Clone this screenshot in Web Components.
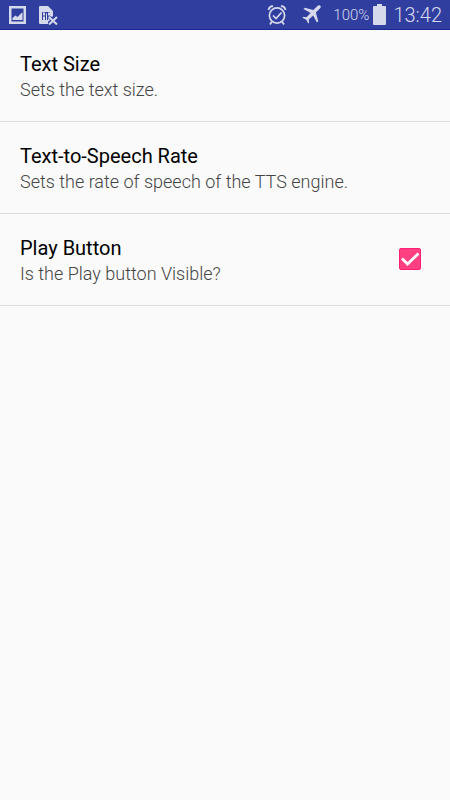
<!DOCTYPE html>
<html lang="en">
<head>
<meta charset="utf-8">
<meta name="viewport" content="width=device-width, initial-scale=1">
<title>Settings</title>
<style>
  body {
    margin: 0;
    min-height: 100vh;
    background-color: #fafafa;
    font-family: Roboto, "Noto Sans", sans-serif;
  }
</style>
</head>
<body>
<settings-screen></settings-screen>

<script>
const statusTemplate = document.createElement('template');
statusTemplate.innerHTML = `
  <style>
  :host {
    display: flex;
    justify-content: space-between;
    box-sizing: border-box;
    height: 30px;
    padding: 0 8px;
    background-color: #303f9f;
    border-bottom: 1px solid #1c2b8f;
    color: #d6d9ec;
  }

  .group {
    display: flex;
    align-items: center;
  }

  .notifications {
    gap: 11px;
  }

  svg {
    display: block;
    fill: currentColor;
  }

  .alarm {
    margin-right: 15px;
  }

  .plane {
    margin-right: 12px;
  }

  .percent {
    margin-right: 4px;
    font-size: 15px;
    line-height: 30px;
    font-weight: 300;
  }

  .clock {
    margin-left: 7px;
    font-size: 20px;
    line-height: 30px;
    font-weight: 300;
  }
  </style>
  <div class="group notifications">
    <svg width="20" height="20" viewBox="0 0 20 20" aria-hidden="true">
      <path fill-rule="evenodd" d="M1 1h17v18H1zM3.500 3.500v13h12v-13z"/>
      <path d="M4.500 15v-2l3-2.500 2 1.500 4-4 1-.5V15z"/>
    </svg>
    <svg width="20" height="20" viewBox="0 0 20 20" aria-hidden="true">
      <path fill-rule="evenodd" d="M0 2q0-1 1-1h8l5 5v5l-1 1-2-1-2 2 2 2-2 2v2H1q-1 0-1-1zM3 7v8h6v-2l1-2h1V7z"/>
      <path d="M4 7.500h2v3H4zM4 11.500h2V15H4zM7 8.500h1V15H7zM9 7.500h2v3H9z"/>
      <path d="M10 12l8 7.500M18 12l-8 7.500" fill="none" stroke="currentColor" stroke-width="2"/>
    </svg>
  </div>
  <div class="group">
    <svg class="alarm" width="20" height="22" viewBox="0 0 20 22" aria-hidden="true">
      <g fill="none" stroke="currentColor">
        <circle cx="10" cy="11.500" r="7.600" stroke-width="1.700"/>
        <path d="M6 11.500l3 3 5.500-6" stroke-width="1.700"/>
        <path d="M1.500 6Q2 2.500 6 2M18.500 6Q18 2.500 14 2M5 17.500l-2 3M15 17.500l2 3" stroke-width="1.800"/>
      </g>
    </svg>
    <svg class="plane" width="19" height="19" viewBox="0 0 19 19" aria-hidden="true">
      <path d="M18.300.7c-.8-.8-2-.4-2.900.4l-4 4L2.800 2.800 1.500 4.100l7.100 3.800-4.200 4.400-3-.5-1 1 3.900 1.900 1.900 3.900 1-1-.4-3 4.400-4.200 3.700 7.100 1.300-1.300-2.300-8.600 4-4c.8-.9 1.200-2.100.4-2.900z"/>
    </svg>
    <span class="percent">100%</span>
    <svg width="13" height="21" viewBox="0 0 13 21" aria-hidden="true">
      <path d="M4 0h5v2h3q1 0 1 1v17q0 1-1 1H1q-1 0-1-1V3q0-1 1-1h3z"/>
    </svg>
    <span class="clock">13:42</span>
  </div>`;

class StatusBar extends HTMLElement {
  constructor(){
    super();
    this.attachShadow({mode: 'open'});
    this.shadowRoot.appendChild(statusTemplate.content.cloneNode(true));
  }
}

window.customElements.define('status-bar', StatusBar);


// Shared by every kind of preference row
const rowStyle = `
  :host {
    display: block;
    border-bottom: 1px solid #dcdcdc;
  }

  .row {
    display: flex;
    align-items: center;
    box-sizing: border-box;
    width: 100%;
    margin: 0;
    padding: 0 20px;
    border: 0;
    background: none;
    color: #000;
    font-family: inherit;
    text-align: left;
    cursor: pointer;
  }

  .text {
    flex: 1;
    display: block;
    padding: 21px 0 18px;
  }

  .title, .summary {
    display: block;
    line-height: 26px;
  }

  .title {
    font-size: 20px;
  }

  .summary {
    color: #444;
    font-size: 18px;
    font-weight: 300;
  }`;

const itemTemplate = document.createElement('template');
itemTemplate.innerHTML = `
  <style>${rowStyle}</style>
  <button class="row" type="button">
    <span class="text">
      <span class="title"><slot name="title"></slot></span>
      <span class="summary"><slot></slot></span>
    </span>
  </button>`;

class PreferenceItem extends HTMLElement {
  constructor(){
    super();
    this.attachShadow({mode: 'open'});
    this.shadowRoot.appendChild(itemTemplate.content.cloneNode(true));
  }
}

window.customElements.define('preference-item', PreferenceItem);


const checkTemplate = document.createElement('template');
checkTemplate.innerHTML = `
  <style>${rowStyle}
  input {
    appearance: none;
    flex: none;
    width: 22px;
    height: 22px;
    margin: 0 9px 1px;
    border: 2px solid #757575;
    border-radius: 2px;
  }

  input:checked {
    border: 1px solid #ff1f74;
    background: #ff4081 url("data:image/svg+xml,%3Csvg xmlns='http://www.w3.org/2000/svg' viewBox='0 0 20 20'%3E%3Cpath d='M2 9.500l5.500 5.500L18.500 4.500' fill='none' stroke='white' stroke-width='2.700'/%3E%3C/svg%3E") center / 20px no-repeat;
  }
  </style>
  <label class="row" for="check">
    <span class="text">
      <span class="title"><slot name="title"></slot></span>
      <span class="summary"><slot></slot></span>
    </span>
    <input id="check" type="checkbox">
  </label>`;

class PreferenceCheck extends HTMLElement {
  constructor(){
    super();
    this.attachShadow({mode: 'open'});
    this.shadowRoot.appendChild(checkTemplate.content.cloneNode(true));

    this.input = this.shadowRoot.querySelector("input");
    this.input.checked = this.hasAttribute("checked");
  }

  getValue(){
    return this.input.checked;
  }
}

window.customElements.define('preference-check', PreferenceCheck);


const screenTemplate = document.createElement('template');
screenTemplate.innerHTML = `
  <style>
  :host {
    display: block;
  }

  main {
    display: flex;
    flex-direction: column;
  }
  </style>
  <status-bar></status-bar>
  <main>
    <preference-item>
      <span slot="title">Text Size</span>Sets the text size.
    </preference-item>
    <preference-item>
      <span slot="title">Text-to-Speech Rate</span>Sets the rate of speech of the TTS engine.
    </preference-item>
    <preference-check checked>
      <span slot="title">Play Button</span>Is the Play button Visible?
    </preference-check>
  </main>`;

class SettingsScreen extends HTMLElement {
  constructor(){
    super();
    this.attachShadow({mode: 'open'});
    this.shadowRoot.appendChild(screenTemplate.content.cloneNode(true));
  }
}

window.customElements.define('settings-screen', SettingsScreen);
</script>
</body>
</html>
